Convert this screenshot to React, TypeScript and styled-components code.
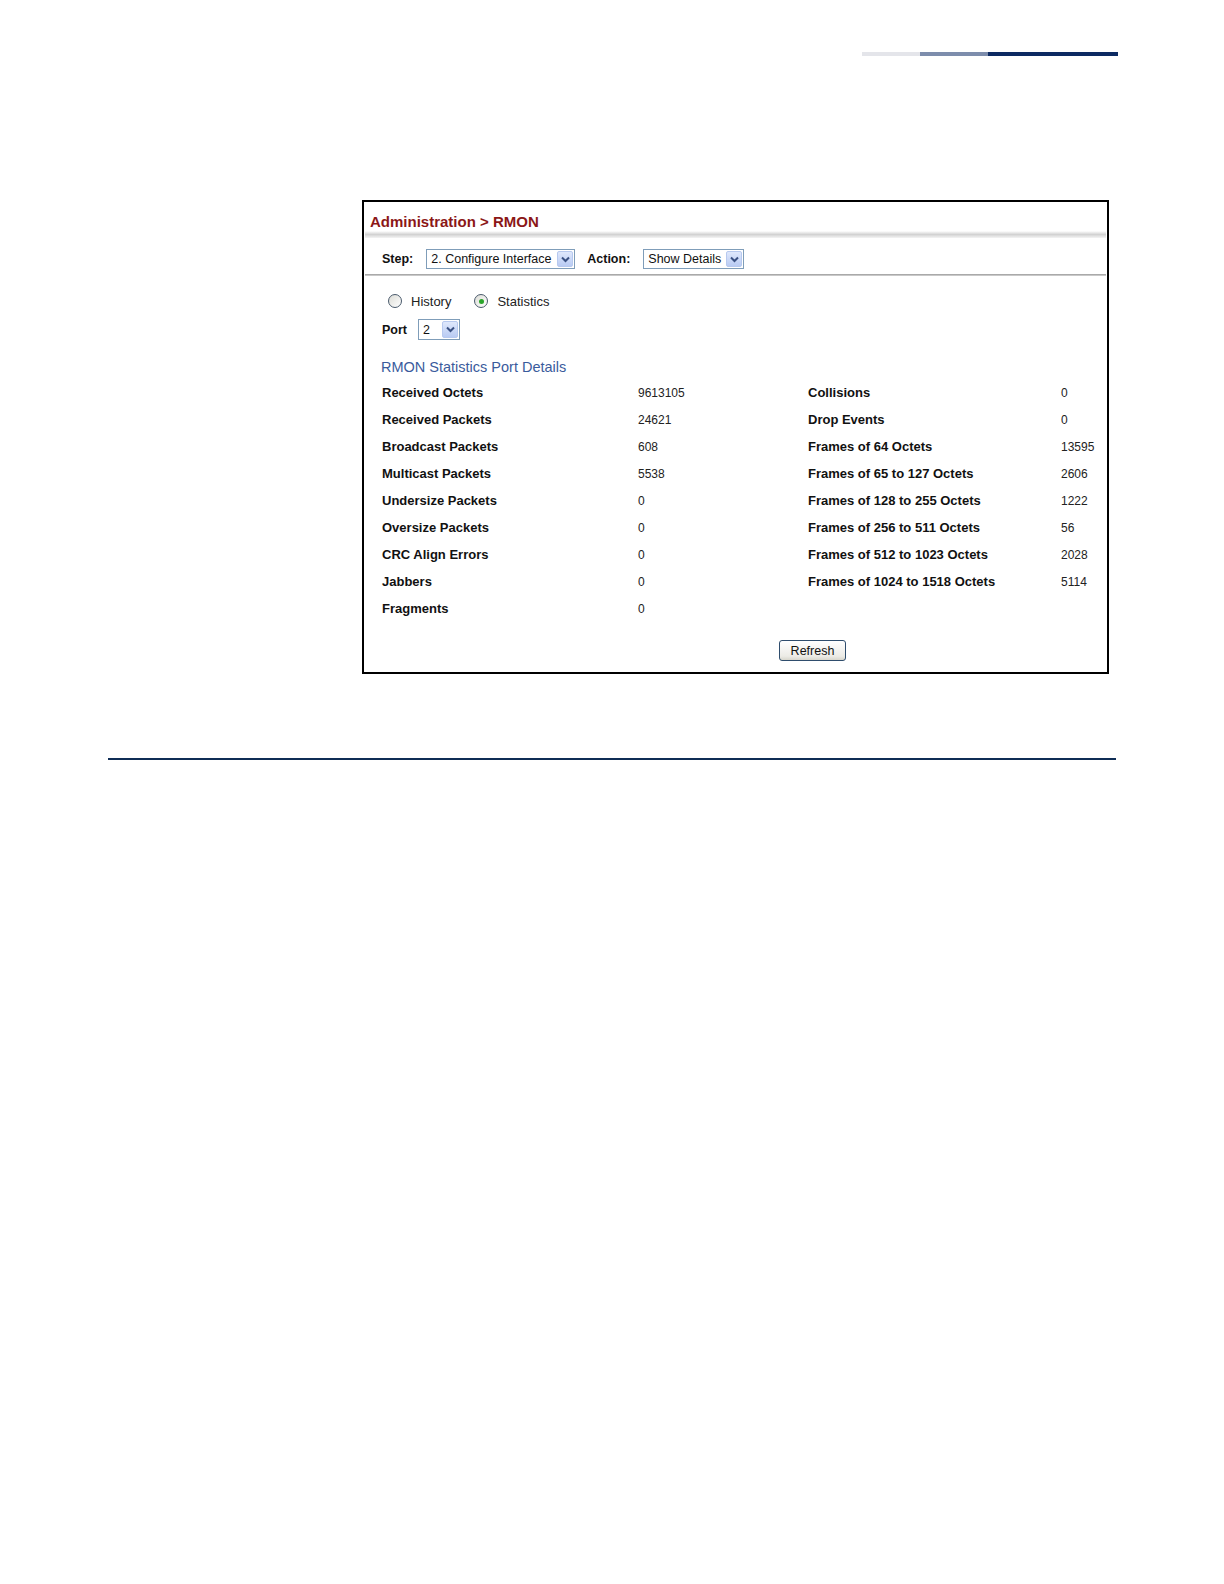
import styled, { createGlobalStyle } from "styled-components";

const GlobalStyle = createGlobalStyle`
  html, body {
    margin: 0;
    padding: 0;
    background: #ffffff;
  }
  body {
    font-family: "Liberation Sans", Arial, sans-serif;
    color: #111;
  }
`;

type Stat = { label: string; value: string };

const leftStats: Stat[] = [
  { label: "Received Octets", value: "9613105" },
  { label: "Received Packets", value: "24621" },
  { label: "Broadcast Packets", value: "608" },
  { label: "Multicast Packets", value: "5538" },
  { label: "Undersize Packets", value: "0" },
  { label: "Oversize Packets", value: "0" },
  { label: "CRC Align Errors", value: "0" },
  { label: "Jabbers", value: "0" },
  { label: "Fragments", value: "0" },
];

const rightStats: Stat[] = [
  { label: "Collisions", value: "0" },
  { label: "Drop Events", value: "0" },
  { label: "Frames of 64 Octets", value: "13595" },
  { label: "Frames of 65 to 127 Octets", value: "2606" },
  { label: "Frames of 128 to 255 Octets", value: "1222" },
  { label: "Frames of 256 to 511 Octets", value: "56" },
  { label: "Frames of 512 to 1023 Octets", value: "2028" },
  { label: "Frames of 1024 to 1518 Octets", value: "5114" },
];

const Chevron = () => (
  <svg width="9" height="7" viewBox="0 0 9 7">
    <path d="M1 1.5 L4.5 5 L8 1.5" fill="none" stroke="#3a5183" strokeWidth="2" />
  </svg>
);

const FakeSelect: React.FC<{ value: string; width: number; height?: number }> = ({
  value,
  width,
  height = 20,
}) => (
  <SelectBox $width={width} $height={height}>
    <SelectText>{value}</SelectText>
    <ArrowBox>
      <Chevron />
    </ArrowBox>
  </SelectBox>
);

const Radio: React.FC<{ checked?: boolean; label: string }> = ({ checked, label }) => (
  <RadioItem>
    <RadioCircle>{checked && <RadioDot />}</RadioCircle>
    <RadioLabel>{label}</RadioLabel>
  </RadioItem>
);

const App: React.FC = () => {
  const rows = leftStats.map((left, i) => ({ left, right: rightStats[i] }));

  return (
    <Page>
      <GlobalStyle />
      <HeaderBar>
        <BarSegment $width={58} $color="#e4e5ea" />
        <BarSegment $width={68} $color="#7d8dac" />
        <BarSegment $width={130} $color="#0d2a62" />
      </HeaderBar>

      <Panel>
        <PanelTitle>Administration &gt; RMON</PanelTitle>
        <TitleShade />

        <StepRow>
          <FieldLabel>Step:</FieldLabel>
          <FakeSelect value="2. Configure Interface" width={149} />
          <FieldLabel $gap={12}>Action:</FieldLabel>
          <FakeSelect value="Show Details" width={101} />
        </StepRow>
        <Separator />

        <Content>
          <RadioRow>
            <Radio label="History" />
            <Radio checked label="Statistics" />
          </RadioRow>

          <PortRow>
            <FieldLabel>Port</FieldLabel>
            <FakeSelect value="2" width={42} height={21} />
          </PortRow>

          <SectionTitle>RMON Statistics Port Details</SectionTitle>

          <StatsGrid>
            {rows.map(({ left, right }) => (
              <StatRow key={left.label}>
                <StatLabel>{left.label}</StatLabel>
                <StatValue>{left.value}</StatValue>
                <StatLabel>{right ? right.label : ""}</StatLabel>
                <StatValue>{right ? right.value : ""}</StatValue>
              </StatRow>
            ))}
          </StatsGrid>

          <ButtonRow>
            <RefreshButton type="button">Refresh</RefreshButton>
          </ButtonRow>
        </Content>
      </Panel>

      <FooterRule />
    </Page>
  );
};

const Page = styled.div`
  width: 1224px;
  min-height: 1584px;
  padding-top: 52px;
  box-sizing: border-box;
  display: flex;
  flex-direction: column;
`;

const HeaderBar = styled.div`
  display: flex;
  justify-content: flex-end;
  padding-right: 106px;
  height: 4px;
`;

const BarSegment = styled.div<{ $width: number; $color: string }>`
  width: ${(p) => p.$width}px;
  height: 4px;
  background: ${(p) => p.$color};
`;

const Panel = styled.div`
  margin: 144px 0 0 362px;
  width: 747px;
  box-sizing: border-box;
  border: 2px solid #000;
  background: #fff;
  display: flex;
  flex-direction: column;
`;

const PanelTitle = styled.div`
  padding: 11px 6px 0;
  line-height: 18px;
  font-size: 15px;
  font-weight: 700;
  color: #8b1717;
`;

const TitleShade = styled.div`
  height: 7px;
  margin: 0 1px;
  background: linear-gradient(#ffffff, #d2d2d2 50%, #f4f4f4);
`;

const StepRow = styled.div`
  display: flex;
  align-items: center;
  padding: 11px 0 5px 18px;
`;

const FieldLabel = styled.span<{ $gap?: number }>`
  font-size: 12.5px;
  font-weight: 700;
  color: #111;
  margin-left: ${(p) => p.$gap ?? 0}px;
  margin-right: 13px;
`;

const Separator = styled.div`
  height: 2px;
  margin: 0 1px;
  background: linear-gradient(#9a9a9a, #d8d8d8);
`;

const SelectBox = styled.div<{ $width: number; $height: number }>`
  width: ${(p) => p.$width}px;
  height: ${(p) => p.$height}px;
  box-sizing: border-box;
  border: 1px solid #7f9db9;
  background: #fff;
  display: flex;
  align-items: center;
  padding: 1px;
`;

const SelectText = styled.span`
  flex: 1;
  padding-left: 3px;
  font-size: 12.5px;
  color: #111;
  white-space: nowrap;
  overflow: hidden;
`;

const ArrowBox = styled.span`
  width: 16px;
  height: 100%;
  box-sizing: border-box;
  border: 1px solid #b7c9ef;
  border-radius: 2px;
  background: linear-gradient(#dfe8fc, #b9cbf3);
  display: flex;
  align-items: center;
  justify-content: center;
`;

const Content = styled.div`
  display: flex;
  flex-direction: column;
  padding: 0 0 11px 16px;
`;

const RadioRow = styled.div`
  display: flex;
  align-items: center;
  gap: 23px;
  margin-top: 17px;
  padding-left: 8px;
  height: 16px;
`;

const RadioItem = styled.label`
  display: flex;
  align-items: center;
  gap: 9px;
`;

const RadioCircle = styled.span`
  width: 14px;
  height: 14px;
  box-sizing: border-box;
  border-radius: 50%;
  border: 1px solid #4a5a6c;
  background: linear-gradient(135deg, #dcdcd6, #ffffff);
  display: flex;
  align-items: center;
  justify-content: center;
`;

const RadioDot = styled.span`
  width: 5px;
  height: 5px;
  border-radius: 50%;
  background: #2aa52a;
`;

const RadioLabel = styled.span`
  font-size: 13px;
  color: #222;
`;

const PortRow = styled.div`
  display: flex;
  align-items: center;
  margin-top: 10px;
  padding-left: 2px;
  height: 21px;

  ${FieldLabel} {
    margin-right: 11px;
  }
`;

const SectionTitle = styled.div`
  margin-top: 18px;
  padding-left: 1px;
  line-height: 18px;
  font-size: 14.5px;
  color: #3a5b9c;
`;

const StatsGrid = styled.div`
  margin-top: 3px;
  display: flex;
  flex-direction: column;
`;

const StatRow = styled.div`
  display: grid;
  grid-template-columns: 256px 170px 253px 1fr;
  height: 27px;
  align-items: center;
  padding-left: 2px;
`;

const StatLabel = styled.span`
  font-size: 13px;
  font-weight: 700;
  color: #111;
  white-space: nowrap;
`;

const StatValue = styled.span`
  font-size: 12px;
  color: #222;
`;

const ButtonRow = styled.div`
  display: flex;
  margin-top: 18px;
  padding-left: 399px;
`;

const RefreshButton = styled.button`
  width: 67px;
  height: 21px;
  padding: 0;
  box-sizing: border-box;
  border: 1px solid #2f4d6d;
  border-radius: 3px;
  background: linear-gradient(#ffffff, #ecebe6 80%, #d8d6cc);
  font-family: "Liberation Sans", Arial, sans-serif;
  font-size: 12.5px;
  color: #111;
`;

const FooterRule = styled.div`
  margin: 84px 0 0 108px;
  width: 1008px;
  height: 2px;
  background: #0f2d55;
`;

export default App;
